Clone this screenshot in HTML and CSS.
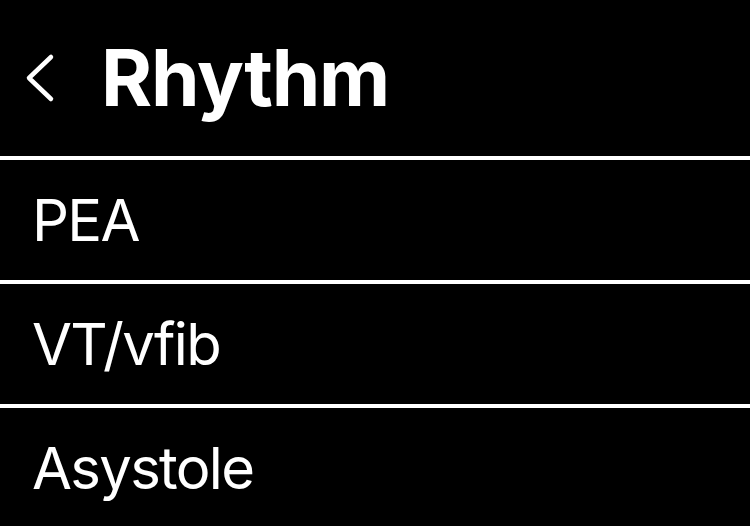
FILE: index.html
```html
<!DOCTYPE html>
<html lang="en">

<head>
    <meta charset="UTF-8">
    <meta name="viewport" content="width=device-width, initial-scale=1.0">
    <title>Rhythm</title>
    <link rel="stylesheet" href="styles.css">
</head>

<body>
    <header class="nav-bar">
        <button class="back-btn" aria-label="Back">
            <svg width="30" height="50" viewBox="0 0 30 50">
                <path d="M26 4 L4 25 L26 46" fill="none" stroke="#fff" stroke-width="4.5" stroke-linecap="round" stroke-linejoin="round" />
            </svg>
        </button>
        <h1 class="nav-title">Rhythm</h1>
    </header>

    <ul class="rhythm-list">
        <li class="rhythm-item">PEA</li>
        <li class="rhythm-item">VT/vfib</li>
        <li class="rhythm-item">Asystole</li>
    </ul>
</body>

</html>
```

FILE: styles.css
```css
body {
    font-family: Inter, 'Liberation Sans', sans-serif;
    background: #000;
    color: #fff;
    margin: 0;
    padding: 0;
}

.nav-bar {
    height: 156px;
    display: flex;
    align-items: center;
    padding-left: 25px;
    box-sizing: border-box;
}

.back-btn {
    background: none;
    border: none;
    padding: 0;
    width: 30px;
    height: 50px;
    display: flex;
    margin-right: 46px;
}

.nav-title {
    margin: 0;
    font-size: 78px;
    font-weight: 700;
    line-height: 1;
    letter-spacing: -1.2px;
}

.rhythm-list {
    list-style: none;
    margin: 0;
    padding: 0;
}

.rhythm-item {
    height: 120px;
    border-top: 4px solid #fff;
    display: flex;
    align-items: center;
    padding-left: 32px;
    font-size: 58px;
    line-height: 1;
    letter-spacing: -1.7px;
}
```
